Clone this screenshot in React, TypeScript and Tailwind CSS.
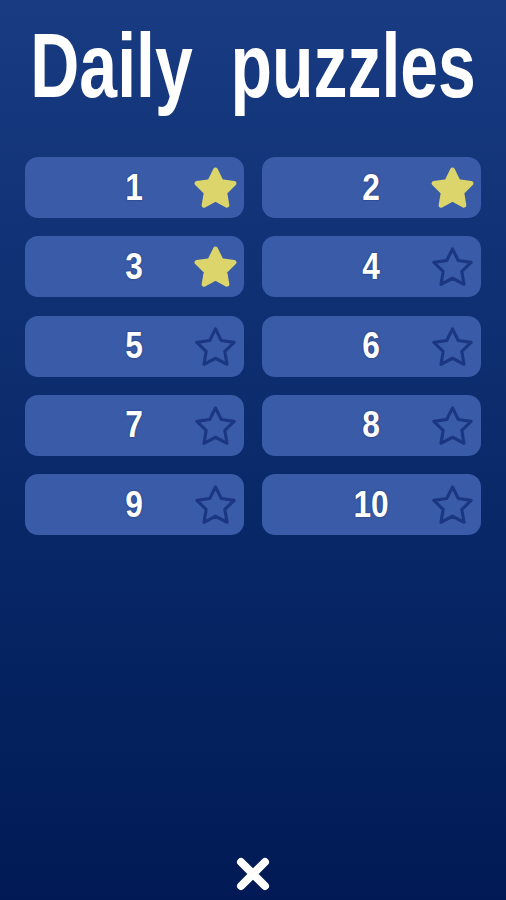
import React from "react";

const STAR_POINTS =
  "12,3 14.94,8.95 21.51,9.91 16.76,14.55 17.88,21.09 12,18 6.12,21.09 7.24,14.55 2.49,9.91 9.06,8.95";

function Star({ filled }: { filled: boolean }) {
  return (
    <svg viewBox="0 0 24 24" className="w-[47px] h-[47px]" aria-hidden>
      {filled ? (
        <polygon points={STAR_POINTS} fill="#dcd56b" stroke="#dcd56b" strokeWidth={2.4} strokeLinejoin="round" />
      ) : (
        <polygon points={STAR_POINTS} fill="none" stroke="#1c3782" strokeWidth={1.6} strokeLinejoin="round" />
      )}
    </svg>
  );
}

const puzzles = [
  { n: 1, done: true },
  { n: 2, done: true },
  { n: 3, done: true },
  { n: 4, done: false },
  { n: 5, done: false },
  { n: 6, done: false },
  { n: 7, done: false },
  { n: 8, done: false },
  { n: 9, done: false },
  { n: 10, done: false },
];

export default function App() {
  return (
    <div
      className="h-[900px] w-full flex flex-col items-stretch bg-linear-to-b from-[#183b82] to-[#011a55] overflow-hidden"
      style={{ fontFamily: '"Liberation Sans", Arial, sans-serif' }}
    >
      <div className="pt-[21px] flex justify-center">
        <h1 className="text-[90px] leading-none text-white font-bold whitespace-pre scale-x-[0.755] origin-center">
          Daily  puzzles
        </h1>
      </div>
      <div className="mt-[46px] px-[25px] grid grid-cols-2 gap-x-[18px] gap-y-[18.3px]">
        {puzzles.map((p) => (
          <div
            key={p.n}
            className="h-[61px] rounded-[13px] bg-[#3a5ba7] grid grid-cols-[1fr_auto_1fr] items-center"
          >
            <div />
            <span
              className="text-white font-bold text-[36px] leading-none scale-x-[0.88]"
              style={{ textShadow: "0 0 2px rgba(20,40,100,0.9)" }}
            >
              {p.n}
            </span>
            <div className="flex justify-end pr-[5px]">
              <Star filled={p.done} />
            </div>
          </div>
        ))}
      </div>
      <div className="mt-auto pb-[6px] flex justify-center">
        <svg viewBox="0 0 40 40" className="w-[40px] h-[40px]" aria-label="close">
          <path d="M8 8 L32 32 M32 8 L8 32" stroke="white" strokeWidth={8} strokeLinecap="round" />
        </svg>
      </div>
    </div>
  );
}
